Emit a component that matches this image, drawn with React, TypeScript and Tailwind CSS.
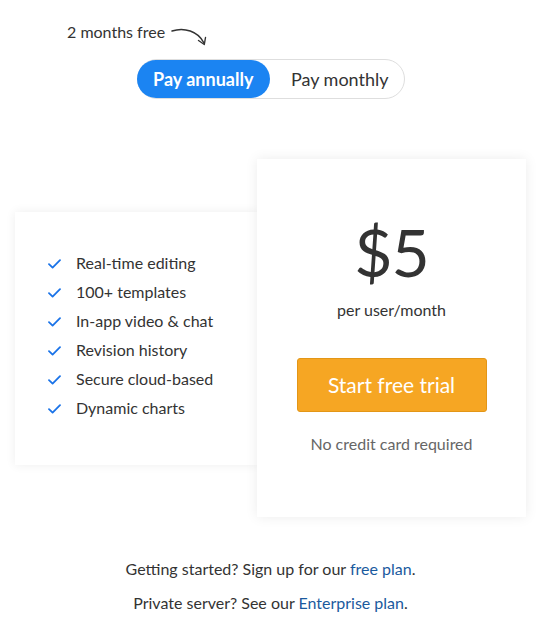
import React from "react";

const features = [
  "Real-time editing",
  "100+ templates",
  "In-app video & chat",
  "Revision history",
  "Secure cloud-based",
  "Dynamic charts",
];

function Check() {
  return (
    <svg width="13" height="10" viewBox="0 0 13 10" fill="none">
      <path d="M1 5.2 L4.6 8.6 L12 1.2" stroke="#1a73e8" strokeWidth="1.8" strokeLinecap="round" strokeLinejoin="round" />
    </svg>
  );
}

export default function App() {
  return (
    <div className="w-[541px] min-h-[622px] bg-white text-[#333] font-['Lato','Noto_Sans',sans-serif] pt-[22px]">
      <div className="flex items-start h-[26px] pl-[67px]">
        <span className="text-[16px] leading-[20px]">2 months free</span>
        <svg width="40" height="26" viewBox="0 0 40 26" fill="none" className="ml-[5px] mt-[3px]">
          <path d="M2 6 C 14 2, 28 6, 34 18" stroke="#333" strokeWidth="1.4" strokeLinecap="round" fill="none" />
          <path d="M28.5 15.5 L34.3 19.5 L35.5 12.5" stroke="#333" strokeWidth="1.4" strokeLinecap="round" strokeLinejoin="round" fill="none" />
        </svg>
      </div>
      <div className="mt-[11px] mx-auto w-[268px] h-[40px] rounded-full border border-[#dedede] flex items-center">
        <div className="w-[134px] h-[38px] -ml-px rounded-full bg-[#1b84f2] text-white font-bold text-[18px] flex items-center justify-center">
          Pay annually
        </div>
        <div className="w-[134px] h-[38px] pl-[6px] text-[18px] text-[#333] flex items-center justify-center">
          Pay monthly
        </div>
      </div>
      <div className="mt-[60px] flex items-center pl-[15px]">
        <div className="w-[243px] h-[253px] bg-white shadow-[0_0_10px_rgba(0,0,0,0.07)] flex flex-col justify-center pl-[33px] pb-[5px]">
          <ul className="flex flex-col gap-[9px]">
            {features.map((f) => (
              <li key={f} className="flex items-center h-[20px] text-[16px]">
                <span className="w-[28px] flex items-center pt-[2px]"><Check /></span>
                <span>{f}</span>
              </li>
            ))}
          </ul>
        </div>
        <div className="-ml-px w-[269px] h-[358px] bg-white shadow-[0_0_12px_rgba(0,0,0,0.08)] relative flex flex-col items-center">
          <div className="mt-[55px] text-[66px] leading-[76px] text-[#333] font-normal tracking-[-1px]">$5</div>
          <div className="mt-[10px] text-[16px] leading-[20px] text-[#333]">per user/month</div>
          <button className="mt-[38px] w-[190px] h-[54px] rounded-[3px] bg-[#f6a623] border border-[#e39617] text-white text-[21px]">
            Start free trial
          </button>
          <div className="mt-[22px] text-[16px] leading-[20px] text-[#666]">No credit card required</div>
        </div>
      </div>
      <div className="mt-[42px] text-center text-[16px] leading-[20px] text-[#333]">
        Getting started? Sign up for our <span className="text-[#1a5a9e]">free plan</span>.
      </div>
      <div className="mt-[14px] text-center text-[16px] leading-[20px] text-[#333]">
        Private server? See our <span className="text-[#1a5a9e]">Enterprise plan</span>.
      </div>
    </div>
  );
}
